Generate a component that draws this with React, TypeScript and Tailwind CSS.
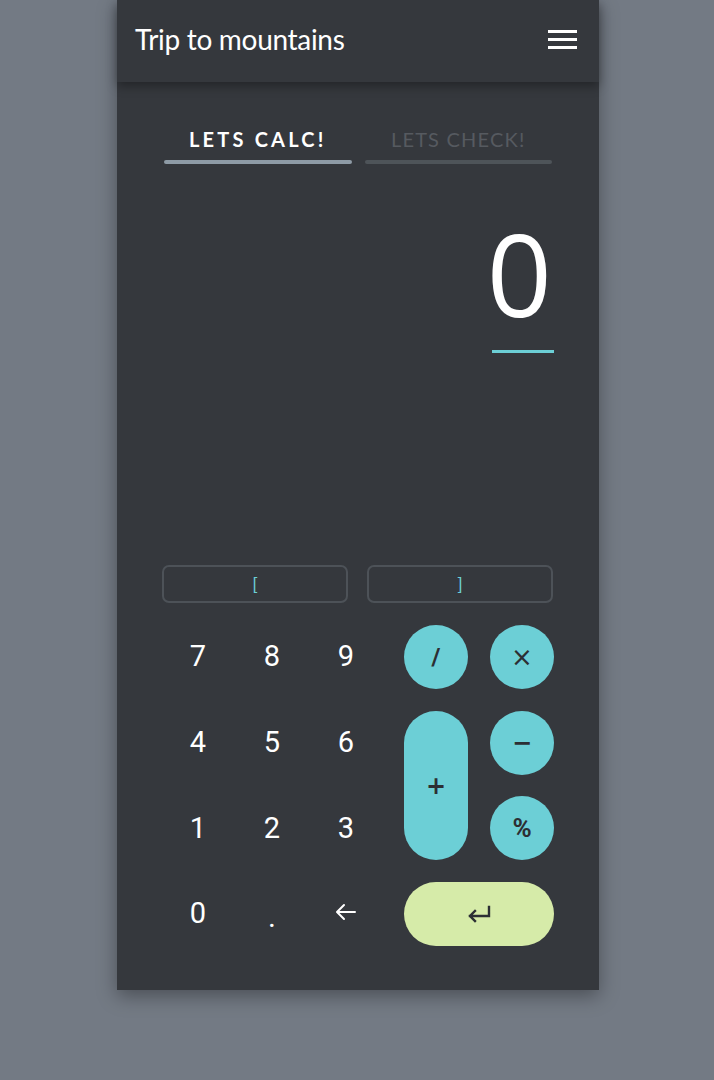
import React from 'react';

const digitRows = [
  ['7', '8', '9'],
  ['4', '5', '6'],
  ['1', '2', '3'],
];

const DigitKey = ({ children }: { children: React.ReactNode }) => (
  <button className="flex h-16 items-center justify-center text-[29px] text-white font-['Roboto',sans-serif]">
    {children}
  </button>
);

const OpKey = ({ children, className = '' }: { children: React.ReactNode; className?: string }) => (
  <button
    className={`flex items-center justify-center rounded-full bg-[#6ccfd6] text-[#2c2f34] ${className}`}
  >
    {children}
  </button>
);

const App: React.FC = () => {
  return (
    <div className="flex min-h-screen justify-center bg-[#737a84] pl-[2px]">
      <div className="flex h-[990px] w-[482px] flex-col bg-[#35383d] shadow-[0_6px_18px_rgba(0,0,0,0.35)]">
        {/* Header */}
        <div className="flex h-[82px] items-center justify-between pb-[4px] pl-[18px] pr-[22px] shadow-[0_4px_10px_rgba(0,0,0,0.35)]">
          <h1 className="text-[28px] text-white font-['Lato',sans-serif] tracking-[-0.3px]">Trip to mountains</h1>
          <div className="flex w-[29px] flex-col gap-[5px]">
            <span className="h-[3px] bg-white" />
            <span className="h-[3px] bg-white" />
            <span className="h-[3px] bg-white" />
          </div>
        </div>

        {/* Tabs */}
        <div className="mt-[45px] grid grid-cols-2 gap-[13px] px-[47px]">
          <div className="flex flex-col items-center">
            <span className="text-[20px] font-bold leading-6 tracking-[0.16em] text-white font-['Lato',sans-serif]">
              LETS CALC!
            </span>
            <span className="mt-[9px] h-[4px] w-full rounded-full bg-[#8e9ba6]" />
          </div>
          <div className="flex flex-col items-center">
            <span className="text-[20px] leading-6 tracking-[0.06em] text-[#565a60] font-['Lato',sans-serif]">
              LETS CHECK!
            </span>
            <span className="mt-[9px] h-[4px] w-full rounded-full bg-[#4e5459]" />
          </div>
        </div>

        {/* Display */}
        <div className="flex flex-1 flex-col items-end pr-[45px] pt-[52px]">
          <div className="flex flex-col items-end">
            <span className="mr-[2px] text-[114px] font-normal leading-none text-white font-['Open_Sans',sans-serif]">0</span>
            <span className="mt-[20px] h-[3px] w-[62px] bg-[#6ccfd6]" />
          </div>
        </div>

        {/* Brackets */}
        <div className="grid grid-cols-2 gap-[19px] pl-[45px] pr-[46px]">
          <button className="h-[38px] rounded-[7px] border-2 border-[#4d5258] text-[18px] text-[#6ccfd6] font-['Lato',sans-serif]">
            [
          </button>
          <button className="h-[38px] rounded-[7px] border-2 border-[#4d5258] text-[18px] text-[#6ccfd6] font-['Lato',sans-serif]">
            ]
          </button>
        </div>

        {/* Keypad */}
        <div className="mt-[22px] mb-[44px] flex gap-[21px] pl-[44px]">
          <div className="grid grid-cols-[74px_74px_74px] gap-y-[21.67px]">
            {digitRows.flat().map((d) => (
              <DigitKey key={d}>{d}</DigitKey>
            ))}
            <DigitKey>0</DigitKey>
            <DigitKey>
              <span className="mt-[4px] text-[30px]">.</span>
            </DigitKey>
            <DigitKey>
              <svg width="22" height="18" viewBox="0 0 22 18" fill="none" stroke="white" strokeWidth="2" strokeLinecap="round" strokeLinejoin="round" className="-mt-[4px]">
                <path d="M20 9H3M9 2L2 9l7 7" />
              </svg>
            </DigitKey>
          </div>
          <div className="grid grid-cols-[64px_64px] grid-rows-[64px_64px_64px_64px] gap-x-[22px] gap-y-[21.67px]">
            <OpKey className="text-[24px] font-bold font-['Roboto',sans-serif]">/</OpKey>
            <OpKey className="text-[26px] font-['DejaVu_Sans',sans-serif]">×</OpKey>
            <OpKey className="row-span-2 text-[24px] font-bold font-['DejaVu_Sans',sans-serif]">+</OpKey>
            <OpKey className="text-[24px] font-bold font-['DejaVu_Sans',sans-serif]">−</OpKey>
            <OpKey className="text-[26px] font-bold font-['Roboto',sans-serif]">%</OpKey>
            <button className="col-span-2 flex items-center justify-center rounded-full bg-[#d6eba9]">
              <svg width="26" height="18" viewBox="0 0 26 18" fill="none" stroke="#2c2f34" strokeWidth="2.4" strokeLinecap="square">
                <path d="M23 2v9H4M9 6l-5 5 5 5" />
              </svg>
            </button>
          </div>
        </div>
      </div>
    </div>
  );
};

export default App;
